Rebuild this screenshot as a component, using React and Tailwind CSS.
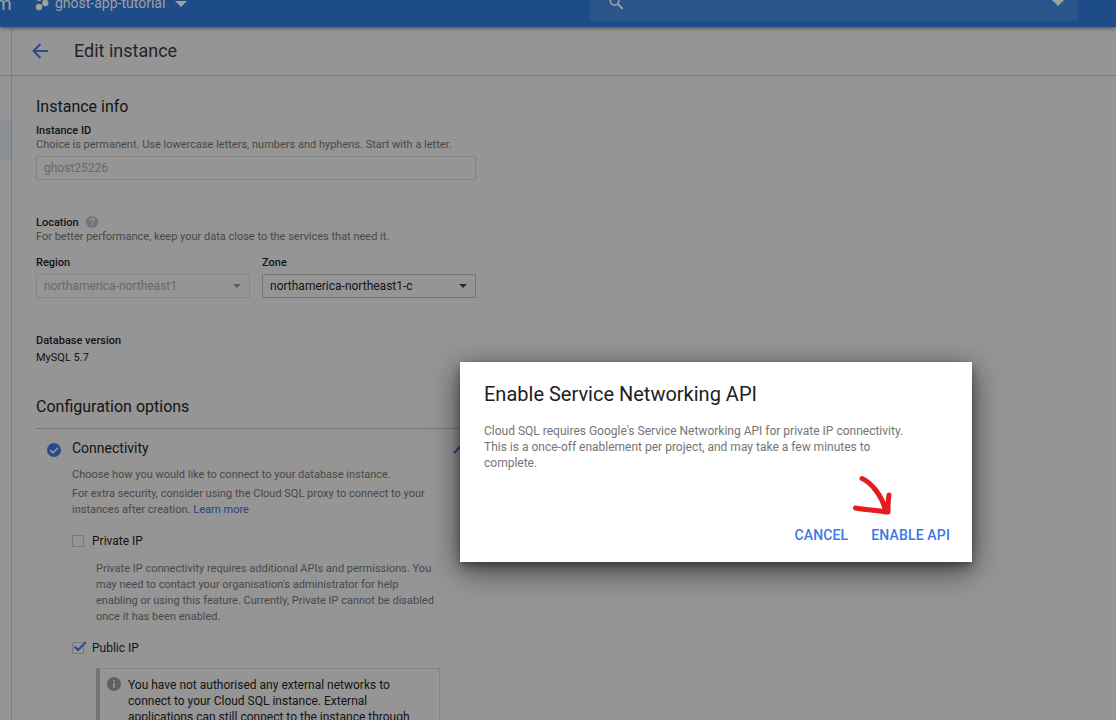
import React from "react";

function HelpIcon() {
  return (
    <svg width="12" height="12" viewBox="0 0 12 12" className="mb-[2px] shrink-0">
      <circle cx="6" cy="6" r="6" fill="#737373" />
      <path d="M4.1 4.7A1.9 1.9 0 1 1 7.1 6C6.4 6.5 6 6.8 6 7.5M6 8.5V9.9" fill="none" stroke="#959595" strokeWidth="1.4" />
    </svg>
  );
}

function InfoIcon() {
  return (
    <svg width="14" height="14" viewBox="0 0 14 14" className="mt-[8px] shrink-0">
      <circle cx="7" cy="7" r="7" fill="#606060" />
      <path d="M7 3V4.7M7 6V10.8" stroke="#959595" strokeWidth="1.8" />
    </svg>
  );
}

function Caret({ color }) {
  return (
    <svg width="8" height="4" viewBox="0 0 8 4" className="mr-px shrink-0">
      <path d="M0 0H8L4 4Z" fill={color} />
    </svg>
  );
}

function TopBar() {
  return (
    <header className="relative z-10 flex h-[27px] shrink-0 items-start overflow-visible bg-[#1e4c88] text-[#a0a0a0] shadow-[0_1px_4px_rgba(0,0,0,0.5)]">
      <div className="flex h-[27px] w-[590px] items-start overflow-hidden">
        <span className="-ml-[5px] -mt-[8px] w-[40px] text-[19px] leading-6">m</span>
        <svg width="14" height="11" viewBox="0 0 14 11" className="shrink-0">
          <circle cx="4" cy="-2" r="3" fill="#a0a0a0" />
          <circle cx="4" cy="7" r="3.2" fill="#a0a0a0" />
          <circle cx="10.3" cy="3" r="3.2" fill="#a0a0a0" />
        </svg>
        <span className="-mt-[7px] ml-[6px] w-[111px] whitespace-nowrap text-[14px] leading-5">ghost-app-tutorial</span>
        <svg width="12" height="7" viewBox="0 0 12 7" className="ml-[9px]">
          <path d="M0 1H12L6 7Z" fill="#a0a0a0" />
        </svg>
      </div>
      <div className="flex h-[21px] w-[488px] items-start justify-between overflow-hidden rounded-b-sm bg-[#2b568c] pl-[19px] pr-[14px]">
        <svg width="16" height="11" viewBox="0 0 16 11">
          <circle cx="5.6" cy="0.9" r="4.2" fill="none" stroke="#a0a0a0" strokeWidth="1.6" />
          <path d="M8.6 3.9L13.6 8.8" stroke="#a0a0a0" strokeWidth="2" />
        </svg>
        <svg width="12" height="6" viewBox="0 0 12 6">
          <path d="M0 0H12L6 6Z" fill="#a0a0a0" />
        </svg>
      </div>
    </header>
  );
}

function Sidebar() {
  return (
    <aside className="flex w-[12px] shrink-0 flex-col border-r border-[#7e7e7e]">
      <div className="h-[49px] border-b border-[#7e7e7e]" />
      <div className="mt-[44px] h-[40px] bg-[#8a9096]" />
    </aside>
  );
}

function InstanceForm() {
  return (
    <section className="flex w-[440px] flex-col text-[11px]">
      <h2 className="mt-[20px] text-[16px] leading-[22px]">Instance info</h2>
      <div className="mt-[6px] font-medium leading-[14px]">Instance ID</div>
      <p className="whitespace-nowrap leading-[14px] text-[#484848]">Choice is permanent. Use lowercase letters, numbers and hyphens. Start with a letter.</p>
      <div className="mt-[4px] flex h-6 items-center border border-[#848484] px-[7px] text-[12px] text-[#686868]">ghost25226</div>

      <div className="mt-[35px] flex h-4 items-center gap-[7px] font-medium">
        <span className="leading-4">Location</span> <HelpIcon />
      </div>
      <p className="-mt-px leading-[14px] text-[#484848]">For better performance, keep your data close to the services that need it.</p>
      <div className="mt-[12px] flex gap-3">
        <div className="w-[214px]">
          <div className="font-medium leading-[14px]">Region</div>
          <div className="mt-[4px] flex h-6 items-center justify-between rounded-[1px] border border-[#868686] px-[7px] text-[12px] text-[#686868]">
            northamerica-northeast1 <Caret color="#5a5a5a" />
          </div>
        </div>
        <div className="w-[214px]">
          <div className="font-medium leading-[14px]">Zone</div>
          <div className="mt-[4px] flex h-6 items-center justify-between rounded-[1px] border border-[#747474] px-[7px] text-[12px]">
            northamerica-northeast1-c <Caret color="#2c2c2c" />
          </div>
        </div>
      </div>

      <div className="mt-[36px] font-medium leading-[14px]">Database version</div>
      <div className="mt-[3px] leading-[14px]">MySQL 5.7</div>
    </section>
  );
}

function Connectivity() {
  return (
    <section className="flex w-[440px] flex-col">
      <h2 className="mt-[31px] text-[16px] leading-[22px]">Configuration options</h2>
      <div className="mt-[10px] flex border-t border-[#767676] pt-[9px]">
        <svg width="14" height="14" viewBox="0 0 14 14" className="ml-[11px] mt-[5px] shrink-0">
          <circle cx="7" cy="7" r="7" fill="#284a8d" />
          <path d="M3.2 7.1L5.9 9.8L11 4.7" fill="none" stroke="#959595" strokeWidth="1.6" />
        </svg>
        <div className="ml-[11px] flex w-[368px] shrink-0 flex-col">
          <h3 className="text-[14px] leading-5">Connectivity</h3>
          <p className="mt-[9px] text-[11px] leading-4 text-[#484848]">Choose how you would like to connect to your database instance.</p>
          <p className="mt-[3px] whitespace-nowrap text-[11px] leading-4 text-[#484848]">
            For extra security, consider using the Cloud SQL proxy to connect to your<br />
            instances after creation. <a className="text-[#26437f]">Learn more</a>
          </p>
          <div className="mt-[15px] flex h-4 items-center text-[12px]">
            <span className="h-3 w-3 border border-[#7a7a7a]" />
            <span className="ml-2">Private IP</span>
          </div>
          <p className="ml-6 mt-[12px] whitespace-nowrap text-[11px] leading-4 text-[#484848]">
            Private IP connectivity requires additional APIs and permissions. You<br />
            may need to contact your organisation's administrator for help<br />
            enabling or using this feature. Currently, Private IP cannot be disabled<br />
            once it has been enabled.
          </p>
          <div className="mt-[15px] flex h-4 items-center text-[12px]">
            <span className="h-3 w-3 border border-[#7a7a7a]">
              <svg width="14" height="12" viewBox="0 0 14 12" className="-mt-[2px] max-w-none">
                <path d="M1.5 5.5L5 9L12.8 1.3" fill="none" stroke="#284a8d" strokeWidth="2" />
              </svg>
            </span>
            <span className="ml-2">Public IP</span>
          </div>
          <div className="ml-6 mt-[12px] flex h-[80px] w-[344px] border border-l-4 border-[#868686] border-l-[#747474] pl-[7px]">
            <InfoIcon />
            <p className="ml-[7px] mt-[8px] whitespace-nowrap text-[12px] leading-4">
              You have not authorised any external networks to<br />
              connect to your Cloud SQL instance. External<br />
              applications can still connect to the instance through
            </p>
          </div>
        </div>
        <svg width="14" height="9" viewBox="0 0 14 9" className="ml-[13px] mt-[7px] shrink-0">
          <path d="M1 8L7 2L13 8" fill="none" stroke="#26437f" strokeWidth="2" />
        </svg>
      </div>
    </section>
  );
}

function Dialog() {
  return (
    <div role="dialog" className="absolute left-[460px] top-[362px] z-20 flex h-[200px] w-[512px] flex-col bg-white px-6 shadow-[0_8px_28px_rgba(0,0,0,0.6),0_4px_8px_rgba(0,0,0,0.3)]">
      <h1 className="mt-[20px] text-[20px] leading-6 text-[#212121]">Enable Service Networking API</h1>
      <p className="mt-[17px] whitespace-nowrap text-[12px] leading-4 text-[#757575]">
        Cloud SQL requires Google's Service Networking API for private IP connectivity.<br />
        This is a once-off enablement per project, and may take a few minutes to<br />
        complete.
      </p>
      <div className="mt-[54px] flex justify-end gap-[23px] text-[14px] font-medium leading-5 tracking-[0.15px] text-[#3b78e7]">
        <button>CANCEL</button>
        <button className="-mr-[2px]">ENABLE API</button>
      </div>
      <svg width="42" height="42" viewBox="0 0 42 42" className="absolute left-[391px] top-[113px]">
        <path d="M11 3.500C20 7.500 31 20 35 37M38 20C37 25 37 32 37 37M4.500 33C14 35 25 35 35 37" fill="none" stroke="#e61b1f" strokeWidth="5" strokeLinecap="round" strokeLinejoin="round" />
      </svg>
    </div>
  );
}

export default function App() {
  return (
    <div className="relative flex h-[720px] w-[1116px] flex-col overflow-hidden bg-[#959595] font-[Roboto,sans-serif] text-[#131313]">
      <TopBar />
      <div className="flex min-h-0 flex-1">
        <Sidebar />
        <main className="flex min-w-0 flex-1 flex-col">
          <div className="flex h-[49px] shrink-0 items-center border-b border-[#7b7b7b] pl-[20px]">
            <svg width="16" height="16" viewBox="0 0 16 16">
              <path d="M16 8H2M8.500 1L1.500 8L8.500 15" fill="none" stroke="#294b8d" strokeWidth="2" />
            </svg>
            <h1 className="ml-[26px] text-[18px] leading-6 text-[#242424]">Edit instance</h1>
          </div>
          <div className="flex flex-col pl-6">
            <InstanceForm />
            <Connectivity />
          </div>
        </main>
      </div>
      <Dialog />
    </div>
  );
}
